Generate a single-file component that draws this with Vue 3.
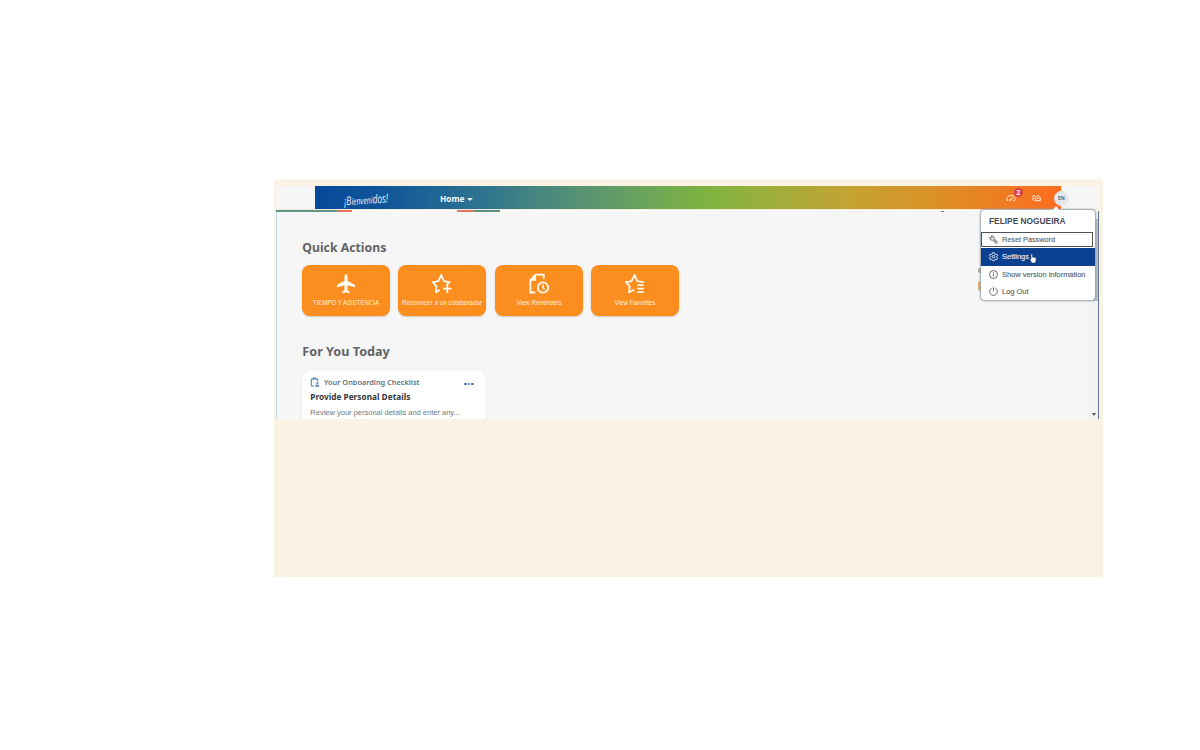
<script setup>
const tiles = [
  { label: 'TIEMPO Y ASISTENCIA', icon: 'plane', w: 66 },
  { label: 'Reconocer a un colaborador', icon: 'starplus', w: 80 },
  { label: 'View Reminders', icon: 'reminder', w: 45 },
  { label: 'View Favorites', icon: 'starlist', w: 41 }
]
const menu = [
  { label: 'Reset Password', icon: 'key', w: 53 },
  { label: 'Settings', icon: 'gear', w: 27 },
  { label: 'Show version information', icon: 'info', w: 83.5 },
  { label: 'Log Out', icon: 'power', w: 26.5 }
]
</script>

<template>
  <div class="page">
    <main class="stage">
      <div class="screen">
        <header class="top">
          <div class="bar">
            <svg class="logo" viewBox="0 0 48 20"><text x="1" y="16" textLength="44" lengthAdjust="spacingAndGlyphs" transform="rotate(-4 22 12)">¡B<tspan class="low">ienveni</tspan>dos!</text></svg>
            <span class="home"><svg class="fit" width="25" height="14"><text x="0" y="11" textLength="24.5" lengthAdjust="spacingAndGlyphs">Home</text></svg><i class="caret"></i></span>
            <span class="gauge">
              <svg width="10" height="8" viewBox="0 0 10 8" fill="none" stroke="#ffe9d8" stroke-width="1"><path d="M2.3 6.5H1.1C.3 3.7 2 1.5 5 1.5s4.7 2.2 3.9 5H7.3M4.6 6 6.8 3.6" /><circle cx="4.5" cy="6" r=".7" /></svg>
              <b class="badge">2</b>
            </span>
            <svg class="chat" width="9" height="8" viewBox="0 0 9 8" fill="none" stroke="#ffe9d8" stroke-width="1"><path d="M3 1.7H1V6.6M3.3 7V3.4L5.8 1.5l2.5 1.9V6.6H3.3M5 5V4.2h1.8V5" /></svg>
            <span class="avatar">EN</span>
          </div>
        </header>

        <section class="body">
          <i class="strip s1"></i><i class="strip s2"></i><i class="speck"></i><i class="smudge"></i>
          <div class="content">
            <h2 class="h-quick"><svg class="fit" width="90" height="20"><text x="0.3" y="14.7" textLength="84" lengthAdjust="spacingAndGlyphs">Quick Actions</text></svg></h2>
            <div class="tiles">
              <div v-for="t in tiles" :key="t.icon" class="tile">
                <svg class="ticon" viewBox="0 0 22 22" fill="none" stroke="#fffaf0" stroke-width="1.8" stroke-linejoin="round" stroke-linecap="round">
                  <path v-if="t.icon === 'plane'" fill="#fffaf0" stroke="none" d="M11 1.2c1 0 1.5.8 1.5 2.2v4.3l7.6 4.3v2.2l-7.6-1.6v4.5l2.3 1.9v1.3L11 19.6l-3.8.7V19l2.3-1.9v-4.5l-7.6 1.6V12l7.6-4.3V3.4c0-1.4.5-2.2 1.5-2.2Z" />
                  <g v-if="t.icon === 'starplus'"><path d="M8.2 17.3 4.8 19.4l.7-6L1.8 9.1l5.6-1L10.2 2l2.8 6.1 5.7 1-2.5 2.2" /><path d="M16.3 12.2v7M12.8 15.7h7" /></g>
                  <g v-if="t.icon === 'reminder'"><path d="M6.5 19.5H2.4V7.1l5.2-5.4h8.2v3.3" /><path d="M3 7.2 7.6 2.4V7.2Z" fill="#fffaf0" stroke-width=".8" /><circle cx="15" cy="14.5" r="5.2" /><path d="M15 12v2.8l1.2 1.2" stroke-width="1.5" /></g>
                  <g v-if="t.icon === 'starlist'"><path d="M9.6 17 5 19.4l.7-6L1.8 9.1l5.8-1L10.5 2l2.8 6.1 5.8 1" /><path d="M14 12.1h5M14 15.6h5M14 19.1h5" /></g>
                </svg>
                <svg class="tlabel" width="86" height="10"><text x="43" y="7.5" text-anchor="middle" :textLength="t.w" lengthAdjust="spacingAndGlyphs">{{ t.label }}</text></svg>
              </div>
            </div>
            <h2 class="h-today"><svg class="fit" width="92" height="20"><text x="0.3" y="14.7" textLength="87.5" lengthAdjust="spacingAndGlyphs">For You Today</text></svg></h2>
            <article class="card">
              <div class="card-head">
                <svg width="10" height="10" viewBox="0 0 10 10" fill="none" stroke="#4379b0" stroke-width="1"><path d="M4 9H1.3V2h6.5v2.6M3 2.4V1h3v1.4" /><circle cx="7.2" cy="6.2" r=".7" /><path d="M5.4 9.2c.2-1.5 3.4-1.5 3.6 0Z" /></svg>
                <svg class="ctext kicker" width="100" height="12"><text x="0" y="9" textLength="95.5" lengthAdjust="spacingAndGlyphs">Your Onboarding Checklist</text></svg>
                <span class="dots"><i></i><i></i><i></i></span>
              </div>
              <svg class="ctext title" width="120" height="14"><text x="0.3" y="10" textLength="100" lengthAdjust="spacingAndGlyphs">Provide Personal Details</text></svg>
              <svg class="ctext desc" width="160" height="12"><text x="0.3" y="9" textLength="149.5" lengthAdjust="spacingAndGlyphs">Review your personal details and enter any...</text></svg>
            </article>
          </div>
          <aside class="scroll"><i class="thumb"></i><i class="down"></i></aside>
        </section>

        <i class="leak green"></i><i class="leak orange"></i>
        <nav class="menu">
          <svg class="user" width="100" height="22"><text x="9" y="13.8" textLength="76.5" lengthAdjust="spacingAndGlyphs">FELIPE NOGUEIRA</text></svg>
          <div v-for="m in menu" :key="m.icon" class="item" :class="m.icon">
            <svg class="micon" viewBox="0 0 10 10" fill="none" stroke="currentColor" stroke-width="1">
              <g v-if="m.icon === 'key'"><path d="M5.5 3.7 5.2 2 3.5.8 2.6 1l1 1.4-.9 1-1.5-.9-.5.9L2 5.5l2 .3 4 3.7 1.5-1.4Z" /><path d="m4.8 4.6 3.3 3.2" /></g>
              <g v-if="m.icon === 'gear'"><path d="m4 .8-.4 1.3-1.2.6-1.3-.3-.7 1.4.9 1.1v1L.4 7l.7 1.3 1.4-.3 1.1.7L4 9.6h2l.4-1.1 1.2-.6 1.3.3.7-1.3-.9-1v-1l.9-1.1-.7-1.4-1.3.3-1.2-.6L6 .8Z" /><circle cx="5" cy="5.2" r="1.5" /></g>
              <g v-if="m.icon === 'info'"><circle cx="5" cy="5" r="4.4" /><path d="M5 4.2v3M5 2.4v1" /></g>
              <g v-if="m.icon === 'power'"><path d="M3 1.2a4.3 4.3 0 1 0 4 0M5 .3v4.4" /></g>
            </svg>
            <svg class="mlabel" width="90" height="13"><text x="0" y="9.3" :textLength="m.w" lengthAdjust="spacingAndGlyphs">{{ m.label }}</text></svg>
          </div>
          <svg class="cursor" width="8" height="11" viewBox="0 0 8 11"><path d="M2 1.2Q2.8.3 3.4 1.3V4l3.2.8q.7.3.6 1.2L6.4 10H3L.7 6.5q.3-.9 1.3-.2Z" fill="#fff" stroke="#26334d" stroke-width=".5" /></svg>
        </nav>
      </div>
    </main>
  </div>
</template>

<style>
body { background: #fff; }
</style>
<style scoped>
* { box-sizing: border-box; }
.page { width: 1200px; height: 750px; padding: 179px 0 0 274px; overflow: hidden; font-family: "Noto Sans", "Open Sans", sans-serif; background: #fff; }
svg { display: block; overflow: visible; flex: none; }
.stage { width: 829px; height: 398px; background: #faf2e2; padding: 7px 4px 0 2px; border-top: 1px solid #fcf8ef; }
.screen { position: relative; width: 823px; margin-top: -1px; }
.top { height: 24px; background: #f6f6f6; padding-left: 39px; border-bottom: 1px solid #f5e9d6; }
.bar { width: 746px; height: 23px; position: relative; display: flex; align-items: center; background: linear-gradient(90deg, #05499a 0%, #10559a 9%, #2d7390 22%, #4d8b7b 32%, #66a062 42%, #7db341 52%, #9aaf3b 60%, #c2a333 71%, #d79429 81%, #ee7d22 92%, #fd6c20 100%); }
.logo { width: 48px; height: 20px; margin-left: 28px; }
.logo text { font: italic 500 12px "Open Sans", sans-serif; fill: #e9f3ff; }
.logo .low { font-size: 9.5px; }
.home { display: flex; align-items: center; margin-left: 48.5px; }
.home text { font: 700 8.6px "Noto Sans", sans-serif; fill: #f5faff; }
.caret { border: 3px solid transparent; border-top: 3px solid #e9f0f6; border-bottom: 0; margin-left: 2px; margin-top: 3px; }
.gauge { position: relative; top: 0; margin-left: auto; margin-right: 15.5px; }
.badge { position: absolute; left: 7.5px; top: -6px; width: 9.5px; height: 9.5px; border-radius: 50%; background: #d83c44; color: #fff; font: 700 7px/9.5px "Noto Sans", sans-serif; text-align: center; }
.chat { margin-right: 13.5px; }
.avatar { width: 15px; height: 15px; margin-right: -8px; margin-top: 2px; border-radius: 50%; background: #e5e7eb; color: #536a83; font: 700 5px/15px "Noto Sans", sans-serif; text-align: center; }
.body { position: relative; height: 209px; background: #f6f6f6; border-left: 1px solid #c4dce5; border-top: 1px solid #fff; overflow: hidden; display: flex; }
.strip { position: absolute; top: 0; height: 1px; }
.top::after { content: ""; position: absolute; left: 0; top: 24px; z-index: 1; width: 76px; height: 2px; background: linear-gradient(90deg, #60958a 0 61px, #e3766a 61px); }
.top::before { content: ""; position: absolute; left: 181px; top: 24px; z-index: 1; width: 43px; height: 2px; background: linear-gradient(90deg, #df7468 0 17px, #5c9183 17px); }
.s1, .s2 { display: none; }
.speck { position: absolute; left: 664px; top: -1px; width: 3px; height: 2px; background: #777; }
.smudge { position: absolute; left: 570px; top: 0; width: 20px; height: 1px; background: #ececec; }
.content { flex: 1; padding: 26px 0 0 25px; }
h2 { margin: 0; height: 20px; }
h2 text { font: 700 12.5px "Noto Sans", sans-serif; fill: #626365; }
.tiles { display: flex; gap: 8.3px; margin-top: 8px; }
.tile { width: 88px; height: 51px; border-radius: 8px; background: #fc8d1f; box-shadow: 0 1px 2px #d3c8bc; display: flex; flex-direction: column; align-items: center; }
.ticon { width: 22px; height: 22px; margin-top: 8px; }
.tlabel { margin-top: 2px; }
.tlabel text { font: 400 6.5px "Liberation Sans", sans-serif; fill: #fff1dc; }
.h-today { margin-top: 25px; }
.card { width: 184px; height: 70px; margin-top: 8.5px; padding: 5.5px 8px; background: #fff; border-radius: 10px; box-shadow: 0 0 2px #dcdcdc; }
.card-head { display: flex; align-items: center; height: 13px; }
.kicker { margin-left: 4px; }
.kicker text { font: 600 7.8px "Noto Sans", sans-serif; fill: #63717e; }
.title { margin-top: 2px; }
.title text { font: 700 8.3px "Noto Sans", sans-serif; fill: #34383d; }
.desc { margin-top: 1.5px; }
.desc text { font: 400 7.5px "Liberation Sans", sans-serif; fill: #747980; }
.dots { display: flex; gap: 1px; margin-left: auto; margin-right: 4.5px; margin-top: 5px; }
.dots i { width: 2.4px; height: 2.4px; border-radius: 50%; background: #3473b1; }
.scroll { position: relative; width: 10px; background: #f1f2f2; border-right: 1.5px solid #66799d; }
.thumb { position: absolute; top: 8px; right: 0; width: 5px; height: 82px; background: #b9bec2; }
.down { position: absolute; right: 2px; bottom: 3px; border: 2.5px solid transparent; border-top: 3px solid #555; border-bottom: 0; }
.leak { position: absolute; left: 702px; width: 5px; }
.green { top: 82px; height: 5px; background: #91ae72; border-radius: 3px; }
.orange { top: 95px; height: 10px; background: #e4ac60; border-radius: 4px; }
.menu { position: absolute; left: 705px; top: 24px; z-index: 2; width: 114px; height: 90px; background: #fff; border-radius: 4px; box-shadow: 0 0 2px 0.5px #93a0ab; }
.menu::before { content: ""; position: absolute; left: 71px; top: -4px; border: 4.5px solid transparent; border-top: 0; border-bottom: 5px solid #fff; }
.user text { font: 700 8.3px "Liberation Sans", sans-serif; fill: #464b53; }
.user { margin-left: -1px; }
.item { height: 17.2px; padding-left: 8px; display: flex; align-items: center; color: #555e68; }
.item.key { height: 15px; margin: 0 2px 1px 0; padding-left: 7px; border: 1px solid #4f5358; }
.item.gear { background: #0b4090; color: #eaf3ff; height: 17.5px; }
.micon { width: 9px; height: 9px; margin-right: 4px; }
.mlabel text { font: 400 7.7px "Liberation Sans", sans-serif; fill: currentColor; stroke: currentColor; stroke-width: .12px; }
.cursor { position: absolute; left: 48px; top: 43px; }
</style>
